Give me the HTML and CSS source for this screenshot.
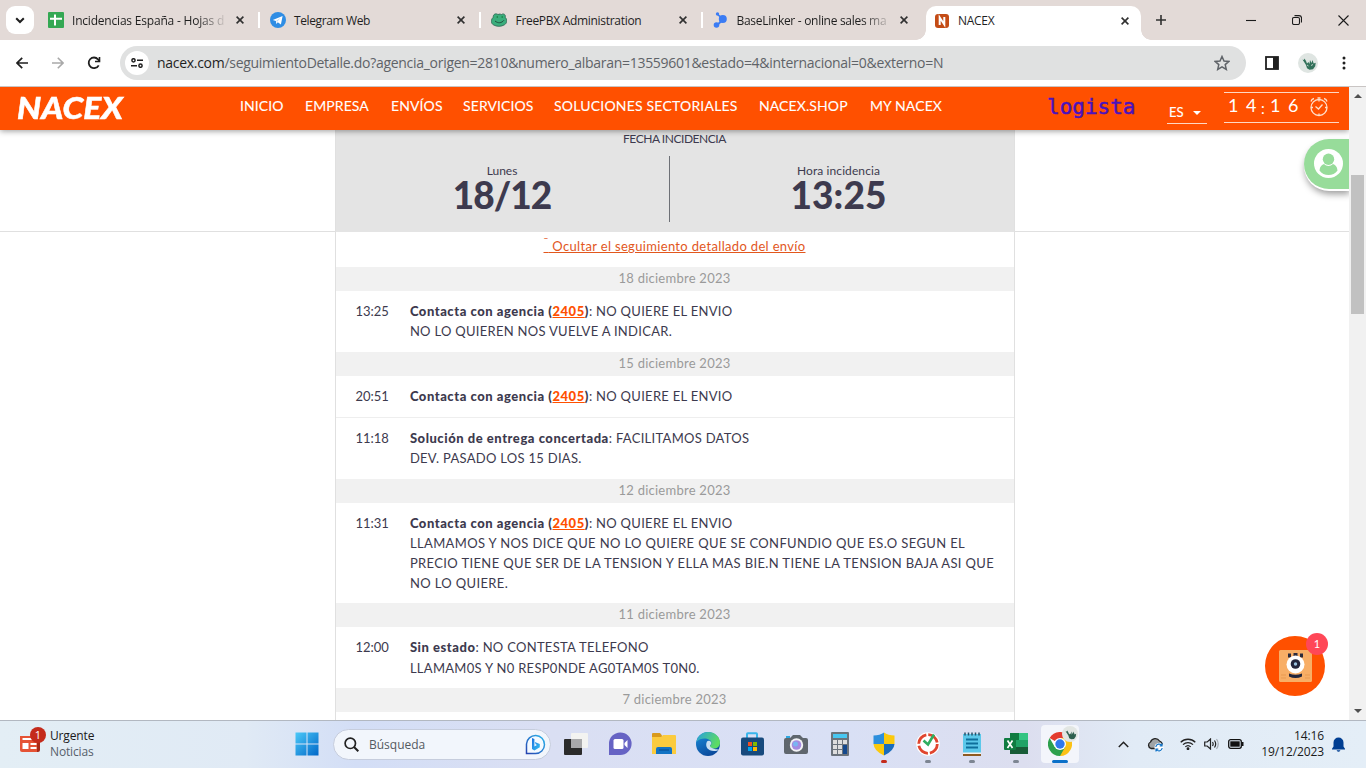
FILE: index.html
```html
<!DOCTYPE html>
<html lang="es">
<head>
<meta charset="utf-8">
<title>NACEX</title>
<link rel="stylesheet" href="styles.css">
</head>
<body>
<div class="screen">
  <div class="tabstrip">
    <div class="tabsearch"><svg width="10" height="7" viewBox="0 0 10 7"><path d="M1.2 1.2 5 5l3.8-3.8" fill="none" stroke="#1f1f1f" stroke-width="2"/></svg></div>
    <div class="tab">
      <svg class="fav" viewBox="0 0 16 16"><rect width="16" height="16" rx="1" fill="#34a853"/><path d="M7 2.5v11M2 6.7h12" stroke="#fff" stroke-width="2"/></svg>
      <span class="tab-title fade t1">Incidencias España - Hojas d</span>
      <svg class="x" viewBox="0 0 8 8"><path d="M.6.6l6.8 6.8M7.4.6.6 7.4"/></svg>
    </div>
    <div class="tab">
      <svg class="fav" viewBox="0 0 16 16"><circle cx="8" cy="8" r="8" fill="#2f8de4"/><path d="M2.8 8 12.6 4l-1.7 8.6-3.1-2.3-1.5 1.6-.4-2.9z" fill="#fff"/><path d="M6 9l5-3.5-3.8 4.3" fill="#b8d8f5"/></svg>
      <span class="tab-title t2">Telegram Web</span>
      <svg class="x" viewBox="0 0 8 8"><path d="M.6.6l6.8 6.8M7.4.6.6 7.4"/></svg>
    </div>
    <div class="tab">
      <svg class="fav" viewBox="0 0 16 16"><path d="M2.2 5.3C2 2 5 1 7 2.6c1.4-.8 2.4-.6 3.3 0C12.500 1 15 2.500 14.200 5.300c2.300 2.200 2 6-.8 7.500-3.200 2-7.600 2-10.700.2C-.5 11.400-.2 7.500 2.200 5.300z" fill="#3aae7c" stroke="#2b6350" stroke-width=".8"/><circle cx="6.300" cy="5" r=".8" fill="#173"/><circle cx="11.200" cy="5" r=".8" fill="#173"/><path d="M4 9c3 2.500 6.500 2.300 9-.8" fill="none" stroke="#205040"/></svg>
      <span class="tab-title t3">FreePBX Administration</span>
      <svg class="x" viewBox="0 0 8 8"><path d="M.6.6l6.8 6.8M7.4.6.6 7.4"/></svg>
    </div>
    <div class="tab last">
      <svg class="fav" viewBox="0 0 16 16"><g fill="#3b7cf4"><circle cx="9.800" cy="7" r="4"/><circle cx="3.500" cy="13" r="2.800"/><circle cx="4.500" cy="1.900" r="1.700"/><path d="M3.900 12 8 8l1.500 1.500-4.500 4zM4 3l1.200-1L9 5 7.500 6z"/></g></svg>
      <span class="tab-title fade t4">BaseLinker - online sales ma</span>
      <svg class="x" viewBox="0 0 8 8"><path d="M.6.6l6.8 6.8M7.4.6.6 7.4"/></svg>
    </div>
    <div class="tab active">
      <svg class="fav small" viewBox="0 0 14 14"><rect width="14" height="14" rx="3" fill="#c44c16"/><path d="M4.700 11V3.500l4.600 7V3" fill="none" stroke="#fff" stroke-width="2"/></svg>
      <span class="tab-title t5">NACEX</span>
      <svg class="x" viewBox="0 0 8 8"><path d="M.6.6l6.8 6.8M7.4.6.6 7.4"/></svg>
    </div>
    <svg class="plus" viewBox="0 0 10 10"><path d="M5 0v10M0 5h10" stroke="#303030" stroke-width="1.600"/></svg>
    <div class="winctl">
      <svg width="10" height="10" viewBox="0 0 10 10"><path d="M0 5.500h10"/></svg>
      <svg width="10" height="10" viewBox="0 0 10 10"><rect x=".5" y="2.500" width="7" height="7" rx="1.500"/><path d="M2.500.6H7a2.500 2.500 0 0 1 2.500 2.500v4.500"/></svg>
      <svg width="11" height="11" viewBox="0 0 11 11"><path d="M.5.5l10 10M10.500.5l-10 10"/></svg>
    </div>
  </div>

  <div class="toolbar">
    <svg class="nav-ic" width="12" height="12" viewBox="0 0 12 12"><path d="M12 6H1.200M6.200.8 1 6l5.200 5.200" fill="none" stroke="#1f1f1f" stroke-width="1.700"/></svg>
    <svg class="nav-ic" width="12" height="12" viewBox="0 0 12 12"><path d="M0 6h10.800M5.800.8 11 6l-5.200 5.200" fill="none" stroke="#a9a9a9" stroke-width="1.600"/></svg>
    <svg class="nav-ic reload" width="14" height="14" viewBox="0 0 14 14"><path d="M11.700 9.300A5.300 5.300 0 1 1 11 3.300L12.500 5" fill="none" stroke="#1f1f1f" stroke-width="1.800"/><path d="M13.300 1v5.300H8V4.700h3.700V1z" fill="#1f1f1f"/></svg>
    <div class="omnibox">
      <span class="site"><svg width="12" height="10" viewBox="0 0 12 10" fill="none" stroke="#1f1f1f" stroke-width="1.500"><circle cx="2.500" cy="2.300" r="1.600"/><path d="M6 2.300h6M0 7.700h6"/><circle cx="9.500" cy="7.700" r="1.600"/></svg></span>
      <span class="url"><b>nacex.com</b>/seguimientoDetalle.do?agencia_origen=2810&amp;numero_albaran=13559601&amp;estado=4&amp;internacional=0&amp;externo=N</span>
      <svg class="star" width="16" height="16" viewBox="0 0 16 16"><path d="M8 1.500l2 4.500 4.900.4-3.700 3.200 1.100 4.800L8 11.900l-4.300 2.500 1.100-4.800L1.100 6.400 6 6z" fill="none" stroke="#5f6368" stroke-width="1.500"/></svg>
    </div>
    <svg class="panel" width="14" height="14" viewBox="0 0 14 14"><rect x="1" y="1" width="12" height="12" fill="none" stroke="#1f1f1f" stroke-width="1.800"/><path d="M8 1h5v12H8z" fill="#1f1f1f"/></svg>
    <svg class="avatar" width="20" height="20" viewBox="0 0 20 20"><circle cx="10" cy="10" r="10" fill="#dfe5e2"/><path d="M4.500 6.500 6 7l.5-1.500L8 8l1 2.500L10.500 9l1 2 .5-4 1.500 3 1-3 1.200 3.500 2-.8-.5 3.500-2.200 3-3.500.5-2.500-1.500L8 12z" fill="#32715a"/><path d="M9 12l1.500 1M13 12.500l2-1" stroke="#dfe5e2" stroke-width=".8"/></svg>
    <svg class="dots" width="4" height="14" viewBox="0 0 4 14" fill="#1f1f1f"><circle cx="2" cy="2" r="1.500"/><circle cx="2" cy="7" r="1.500"/><circle cx="2" cy="12" r="1.500"/></svg>
  </div>

  <div class="viewport">
    <div class="page">
      <header class="site-header">
        <div class="logo"><span>NACEX</span></div>
        <nav class="menu">
          <a class="m1">INICIO</a><a class="m2">EMPRESA</a><a class="m3">ENVÍOS</a><a class="m4">SERVICIOS</a><a class="m5">SOLUCIONES SECTORIALES</a><a class="m6">NACEX.SHOP</a><a class="m7">MY NACEX</a>
        </nav>
        <div class="logista">logista</div>
        <div class="lang"><span>ES</span><i></i></div>
        <div class="clock"><span class="digits"><i>1</i><i>4</i><i class="colon">:</i><i>1</i><i>6</i></span>
          <svg width="20" height="20" viewBox="0 0 20 20" fill="none" stroke="#ffe0cc" stroke-width="1.300"><circle cx="10" cy="10.500" r="8"/><path d="M6.500 9.500l3 2.500 4-4.500M10 2.500v2M10 16.500v2M2 10.500h2M16 10.500h2M2 4.500Q2.500 2 5 1.500M18 4.500Q17.500 2 15 1.500M8.500 1h3"/></svg>
        </div>
      </header>

      <div class="content">
        <div class="gutter"></div>
        <main class="track">
          <section class="incident">
            <div class="inc-title">FECHA INCIDENCIA</div>
            <div class="inc-cols">
              <div class="inc-col left"><span>Lunes</span><strong class="date">18/12</strong></div>
              <div class="inc-col right"><span>Hora incidencia</span><strong>13:25</strong></div>
            </div>
          </section>
          <div class="toggle"><a><sup>ˉ</sup>&nbsp;Ocultar el seguimiento detallado del envío</a></div>

          <div class="day">18 diciembre 2023</div>
          <div class="entry"><time>13:25</time><div class="desc"><p><b>Contacta con agencia (<a>2405</a>)</b>: NO QUIERE EL ENVIO</p><p>NO LO QUIEREN NOS VUELVE A INDICAR.</p></div></div>
          <div class="day">15 diciembre 2023</div>
          <div class="entry"><time>20:51</time><div class="desc"><p><b>Contacta con agencia (<a>2405</a>)</b>: NO QUIERE EL ENVIO</p></div></div>
          <div class="entry ruled"><time>11:18</time><div class="desc"><p><b>Solución de entrega concertada</b>: FACILITAMOS DATOS</p><p>DEV. PASADO LOS 15 DIAS.</p></div></div>
          <div class="day">12 diciembre 2023</div>
          <div class="entry"><time>11:31</time><div class="desc"><p><b>Contacta con agencia (<a>2405</a>)</b>: NO QUIERE EL ENVIO</p><p class="long">LLAMAMOS Y NOS DICE QUE NO LO QUIERE QUE SE CONFUNDIO QUE ES.O SEGUN EL<br>PRECIO TIENE QUE SER DE LA TENSION Y ELLA MAS BIE.N TIENE LA TENSION BAJA ASI QUE<br>NO LO QUIERE.</p></div></div>
          <div class="day">11 diciembre 2023</div>
          <div class="entry"><time>12:00</time><div class="desc"><p><b>Sin estado</b>: NO CONTESTA TELEFONO</p><p>LLAMAM0S Y N0 RESP0NDE AG0TAM0S T0N0.</p></div></div>
          <div class="day">7 diciembre 2023</div>
        </main>
        <div class="gutter"></div>
      </div>

      <div class="user-tab"><svg width="29" height="29" viewBox="0 0 29 29"><circle cx="14.500" cy="14.500" r="14.500" fill="#fff"/><circle cx="14.500" cy="10.300" r="5.700" fill="#97dc9a"/><path d="M5.500 21.500c.3-4 2.500-6 4.500-6.500 2.500 2.500 6.500 2.500 9 0 2 .5 4.200 2.500 4.500 6.500-4 6-14 6-18 0z" fill="#97dc9a"/></svg></div>
      <div class="bot">
        <svg width="60" height="60" viewBox="0 0 60 60"><circle cx="30" cy="30" r="30" fill="#ff5000"/><rect x="14" y="14" width="33" height="32" rx="1.500" fill="#f8ae66"/><path d="M23 17.500h3v4h-3zM28.500 17h4v4h-4zM35 17.500h3v4h-3z" fill="#2b2b3c"/><circle cx="30.500" cy="28.500" r="9" fill="#fff"/><circle cx="30.500" cy="28" r="4.800" fill="#23263c"/><circle cx="30.500" cy="28" r="1.700" fill="#9cc4e0"/><path d="M24 37.500q6.500 2.500 13 0v3q-6.500 3-13 0z" fill="#23263c"/><path d="M16 39h5M16 42h5M40 39h5M40 42h5" stroke="#e99a50"/></svg>
        <span class="bot-badge">1</span>
      </div>
    </div>
    <div class="scrollbar"><i class="up"></i><i class="thumb"></i><i class="down"></i></div>
  </div>

  <div class="taskbar">
    <div class="news">
      <svg width="28" height="28" viewBox="0 0 28 28"><path d="M17 12h5v11q0 2-2 2h-3z" fill="#a72a18"/><path d="M2 9h17v16H4q-2 0-2-2z" fill="#e55335"/><path d="M4.500 12h13" stroke="#fff" stroke-width="2"/><path d="M4.500 16h6v6h-6zM12.500 16h6v2h-6zM12.500 20h6v2h-6z" fill="#fff"/><circle cx="20" cy="8" r="8" fill="#c42b1c"/><text x="20" y="12" text-anchor="middle" class="badge-num">1</text></svg>
      <div class="news-text"><span>Urgente</span><span class="dim">Noticias</span></div>
    </div>
    <svg class="start" width="24" height="24" viewBox="0 0 24 24"><defs><linearGradient id="w" x1="0" y1="0" x2="1" y2="1"><stop offset="0" stop-color="#4cc9f8"/><stop offset="1" stop-color="#0067c8"/></linearGradient></defs><path d="M.5.5h11v11H.5zM12.500.5h11v11h-11zM.5 12.500h11v11H.5zM12.500 12.500h11v11h-11z" fill="url(#w)"/></svg>
    <div class="search">
      <svg width="15" height="15" viewBox="0 0 15 15"><circle cx="6.300" cy="6.300" r="5.200" fill="none" stroke="#222" stroke-width="1.700"/><path d="M10 10l4.300 4.300" stroke="#222" stroke-width="2"/></svg>
      <span>Búsqueda</span>
      <svg class="bing" width="21" height="21" viewBox="0 0 21 21"><defs><linearGradient id="bg" x1="1" y1="0" x2="0" y2="1"><stop offset="0" stop-color="#2cb8ee"/><stop offset="1" stop-color="#2643b0"/></linearGradient><linearGradient id="bb" x1="0" y1="0" x2="1" y2="1"><stop offset="0" stop-color="#1a6fe0"/><stop offset="1" stop-color="#35c3f0"/></linearGradient></defs><path d="M1.500 19.500V10A9 9 0 1 1 10.500 19.500z" fill="#f4faff" stroke="url(#bg)" stroke-width="1.500"/><path d="M7 4l2.400 1v7.500L12 11l-1.300-.7-.9-2.300 5 2v3.300L9.400 16.500 7 15z" fill="url(#bb)"/></svg>
    </div>
    <div class="apps">
      <div class="app"><svg viewBox="0 0 24 24"><rect x="7" y="1" width="17" height="15" rx="1" fill="#f3f3f1"/><rect x="0" y="7" width="18" height="16" rx="1" fill="#2b2b2b"/><path d="M7 7h11v9H7z" fill="#a9a9ab"/></svg></div>
      <div class="app"><svg viewBox="0 0 24 24"><path d="M1 23V12A11.300 11.300 0 1 1 12 23z" fill="#6663c4"/><rect x="5.500" y="7" width="10" height="10" rx="1.500" fill="#fff"/><path d="M16.500 11l3-3v8l-3-3z" fill="#fff"/></svg></div>
      <div class="app"><svg viewBox="0 0 24 24"><path d="M0 2q0-1 1-1h7l2 2.500v4H0z" fill="#d99a1c"/><path d="M0 5h9l2-2h12q1 0 1 1v18H0z" fill="#fbcb3e"/><path d="M4 22v-5q0-2 2-2h12q2 0 2 2v5z" fill="#1273c4"/><path d="M7 18h10" stroke="#0a57a0" stroke-width="1.500"/></svg></div>
      <div class="app"><svg viewBox="0 0 24 24"><defs><linearGradient id="e1" x1="0" y1="0" x2="1" y2=".4"><stop offset="0" stop-color="#289fe0"/><stop offset="1" stop-color="#5ddc62"/></linearGradient><linearGradient id="e2" x1="0" y1="0" x2=".5" y2="1"><stop offset="0" stop-color="#1b8fdd"/><stop offset="1" stop-color="#0b4b9d"/></linearGradient></defs><circle cx="12" cy="12" r="12" fill="url(#e2)"/><path d="M.3 10C2 3 7 0 12 0c7 0 12 5 12 10.500 0 4-3 6-6 6-3 0-4.500-1-4-2.500 1-1 1.500-2 1.500-3C15 6 5 4.500.3 10z" fill="url(#e1)"/><path d="M11 9.500c-2.500 5 1 9.500 7 9.500 2 0 4-.5 5-1.500-1.500 0-3.500 0-5-.7-3-.8-4.500-2.300-4-3.300 1-1 1.500-2 1.200-3-.5-2-3.200-2.500-4.200-1z" fill="#c9dff1"/></svg></div>
      <div class="app"><svg viewBox="0 0 24 24"><path d="M7 7V2q0-.8.8-.8h8.400q.8 0 .8.8v5" fill="none" stroke="#39b5ec" stroke-width="2"/><rect x="1" y="5.500" width="23" height="18" rx="2" fill="#174a7d"/><path d="M8 10h4v4H8z" fill="#f25022"/><path d="M13 10h4v4h-4z" fill="#7fba00"/><path d="M8 15h4v4H8z" fill="#00a4ef"/><path d="M13 15h4v4h-4z" fill="#ffb900"/></svg></div>
      <div class="app"><svg viewBox="0 0 24 24"><path d="M0 8q0-2 2-2h4l3-3h7l3 3h3q2 0 2 2v12q0 2-2 2H2q-2 0-2-2z" fill="#5f666d"/><path d="M2 4h4v2H2z" fill="#2ea7e0"/><circle cx="12.500" cy="13" r="6.700" fill="#f2f2f5"/><circle cx="12.500" cy="13" r="4.800" fill="#a58ae0"/><circle cx="11.500" cy="12" r="2.500" fill="#79b5f2"/></svg></div>
      <div class="app"><svg viewBox="0 0 24 24"><rect x="3" y="0" width="18" height="24" rx="1" fill="#6b737c"/><path d="M5 2h14v4H5z" fill="#48c7f2"/><path d="M5 8h4v4H5zM10 8h4v4h-4zM15 8h4v4h-4zM5 13h4v4H5zM10 13h4v4h-4zM5 18h4v4H5zM10 18h4v4h-4z" fill="#dedede"/><path d="M15 13h4v9h-4z" fill="#14488c"/></svg></div>
      <div class="app red"><svg viewBox="0 0 24 24"><path d="M12 .5Q16 3.500 22.500 3.500V12H12z" fill="#fbc90c"/><path d="M12 .5Q8 3.500 1.500 3.500V12H12z" fill="#2d8fdd"/><path d="M1.500 12q.5 7 10.500 11.500V12z" fill="#fbc90c"/><path d="M22.500 12q-.5 7-10.500 11.500V12z" fill="#1a6dbd"/></svg></div>
      <div class="app gray"><svg viewBox="0 0 24 24"><circle cx="12" cy="12" r="11.800" fill="#fff"/><circle cx="12" cy="12" r="9.300" fill="none" stroke="#e0452f" stroke-width="2.800" stroke-dasharray="12.600 2.008"/><path d="M7.500 8.500l4.500 4L18 2.500" fill="none" stroke="#2fae60" stroke-width="2.600"/></svg></div>
      <div class="app gray"><svg viewBox="0 0 24 24"><path d="M3 21h18v3H3z" fill="#8e5a21"/><path d="M3 2h18v19.500H3z" fill="#5cc8ea"/><path d="M5 .5v3M8.500.5v3M12 .5v3M15.500.5v3M19 .5v3" stroke="#24506a" stroke-width="1.500"/><path d="M6 7.500h12M6 11.500h12M6 15.500h12" stroke="#0e6f9c" stroke-width="1.800"/><path d="M3 20.500h18v1.500H3z" fill="#f5f3ef"/></svg></div>
      <div class="app gray"><svg viewBox="0 0 24 24"><path d="M6 1h18v21H6z" fill="#21a366"/><path d="M6 1h9v7H6z" fill="#107c41"/><path d="M15 1h9v7h-9z" fill="#33c481"/><path d="M6 15h18v7H6z" fill="#185c37"/><rect y="6" width="12" height="12" rx="1" fill="#107c41"/><path d="M3.500 8.500l5 7.500M8.500 8.500 3.500 16" stroke="#fff" stroke-width="1.700"/></svg></div>
      <div class="app current"><svg viewBox="0 0 24 24"><circle cx="12" cy="12" r="12" fill="#fff"/><path d="M12 12 1.600 6A12 12 0 0 1 22.400 6z" fill="#e33b2e"/><path d="M12 12V6h10.400A12 12 0 0 1 12 24z" fill="#fbc116"/><path d="M12 24A12 12 0 0 1 1.600 6l5.200 9L17.200 15z" fill="#2da04d"/><circle cx="12" cy="12" r="6" fill="#fff"/><circle cx="12" cy="12" r="4.700" fill="#3078ea"/></svg>
        <svg class="profile" viewBox="0 0 20 20"><circle cx="10" cy="10" r="10" fill="#e2e6e3"/><path d="M4.500 6.500 6 7l.5-1.500L8 8l1 2.500L10.500 9l1 2 .5-4 1.500 3 1-3 1.200 3.500 2-.8-.5 3.500-2.200 3-3.500.5-2.500-1.500L8 12z" fill="#2e604e"/></svg></div>
    </div>
    <div class="tray">
      <svg class="up-ic" width="11" height="7" viewBox="0 0 11 7"><path d="M.8 6 5.500 1.300 10.200 6" fill="none" stroke="#222" stroke-width="1.500"/></svg>
      <svg class="cloud" width="17" height="15" viewBox="0 0 17 15"><path d="M4 11.500A3.500 3.500 0 0 1 3.500 5a5 5 0 0 1 9-1A4 4 0 0 1 15 9.500L13 11.500z" fill="#a0a4a6" stroke="#222" stroke-width="1.300"/><circle cx="12" cy="10.500" r="4.500" fill="#fff"/><path d="M8.800 10a3.300 3.300 0 0 1 6-1.500M15.200 11a3.300 3.300 0 0 1-6 1.500M15 6.500v2.300h-2.300M9 14.500v-2.300h2.300" fill="none" stroke="#1374c8" stroke-width="1.200"/></svg>
      <svg class="wifi" width="16" height="12" viewBox="0 0 16 12" fill="none" stroke="#222" stroke-width="1.300"><path d="M.7 4.200a10.500 10.500 0 0 1 14.600 0M3 6.600a7.200 7.200 0 0 1 10 0M5.300 8.900a3.900 3.900 0 0 1 5.400 0"/><circle cx="8" cy="10.700" r=".8" fill="#222"/></svg>
      <svg class="vol" width="15" height="12" viewBox="0 0 15 12" fill="none" stroke="#222" stroke-width="1.200"><path d="M.7 4v4h2.500L6.500 11V1L3.200 4zM8.500 4q1.300 2 0 4M10.500 2.500q2.400 3.500 0 7"/><path d="M12.500 1q3.500 5 0 10" stroke="#a5abb2"/></svg>
      <svg class="bat" width="16" height="10" viewBox="0 0 16 10"><rect x=".7" y=".7" width="12.600" height="8.600" rx="2" fill="none" stroke="#111" stroke-width="1.300"/><rect x="2.300" y="2.300" width="9.400" height="5.400" fill="#111"/><path d="M14.500 3v4" stroke="#111" stroke-width="2"/></svg>
      <div class="when"><span>14:16</span><span>19/12/2023</span></div>
      <svg class="bell" width="13" height="15" viewBox="0 0 13 15" fill="#003e92"><path d="M1.500 9.500V5.500a5 5 0 0 1 10 0v4l1.500 2.300v.7H0v-.7zM4.500 13.200h4q-2 3-4 0z"/></svg>
    </div>
  </div>
</div>
</body>
</html>
```
FILE: styles.css
```css
* { box-sizing: border-box; }
body { margin: 0; font-family: "Lato", sans-serif; }
svg { display: block; flex: none; }
.screen { width: 1366px; height: 768px; overflow: hidden; display: flex; flex-direction: column; background: #fff; }

/* Browser tabs */
.tabstrip { height: 40px; flex: none; display: flex; align-items: center; background: #e3dad7; font-family: "Open Sans", sans-serif; font-size: 12px; color: #1f1f1f; padding-left: 6px; }
.tabsearch { width: 28px; height: 28px; border-radius: 9px; background: #fff; margin-right: 4px; display: flex; align-items: center; justify-content: center; }
.tab { width: 221.500px; height: 16px; padding: 0 14px 0 10px; border-right: 2px solid #fff; display: flex; align-items: center; flex: none; }
.tab.last { border-right-color: transparent; }
.fav { width: 16px; height: 16px; margin-right: 8px; }
.fav.small { width: 14px; height: 14px; margin-right: 9px; }
.tab-title { flex: 1; white-space: nowrap; line-height: 18px; padding-top: 1px; letter-spacing: -.3px; }
.t1 { letter-spacing: -.2px; }
.t2 { letter-spacing: -.38px; padding-left: .5px; }
.t3 { letter-spacing: -.3px; padding-left: .5px; }
.fade { -webkit-mask-image: linear-gradient(90deg, #000 125px, transparent 156px); mask-image: linear-gradient(90deg, #000 125px, transparent 156px); }
.x { width: 8px; height: 8px; stroke: #303030; stroke-width: 1.600; }
.tab.active { width: 215px; height: 34px; margin: 6px 0 0 2px; padding: 0 12px 5px 9px; background: #fff; border: 0; border-radius: 10px 10px 0 0; position: relative; }
.tab.active::before, .tab.active::after { content: ""; position: absolute; bottom: 0; width: 10px; height: 10px; }
.tab.active::before { left: -10px; background: radial-gradient(circle at 0 0, transparent 9.500px, #fff 10px); }
.tab.active::after { right: -10px; background: radial-gradient(circle at 100% 0, transparent 9.500px, #fff 10px); }
.plus { width: 10px; height: 10px; margin-left: 15px; }
.winctl { margin-left: auto; padding-right: 17px; display: flex; align-items: center; gap: 36px; }
.winctl svg { fill: none; stroke: #1b1b1b; stroke-width: 1.100; }

/* Browser toolbar */
.toolbar { height: 47px; flex: none; display: flex; align-items: center; background: #fff; border-bottom: 1px solid #c9c5c4; padding-left: 16px; }
.nav-ic { margin-right: 24px; }
.nav-ic.reload { margin: 0 19px 0 -1px; }
.omnibox { width: 1126px; height: 34px; border-radius: 17px; background: #e0e1e1; display: flex; align-items: center; padding: 0 16px 0 5px; }
.site { width: 24px; height: 24px; border-radius: 50%; background: #fff; display: flex; align-items: center; justify-content: center; margin-right: 8px; }
.url { flex: 1; font: 14px/20px "Open Sans", sans-serif; letter-spacing: -.29px; color: #5f6368; white-space: nowrap; }
.url b { font-weight: 400; color: #1f1f1f; }
.panel { margin-left: 19px; }
.avatar { margin-left: 19px; }
.dots { margin-left: 24px; }

/* Viewport */
.viewport { height: 633px; flex: none; display: flex; }
.page { flex: 1; min-width: 0; position: relative; overflow: hidden; }
.site-header { height: 43px; background: #ff5000; color: #fff; display: flex; position: relative; z-index: 2; box-shadow: 0 1px 6px rgba(0,0,0,.4); }
.logo { width: 240px; padding-left: 17px; font: italic 900 30px/41px "Lato", sans-serif; }
.logo span { display: inline-block; transform: scaleX(1.12); transform-origin: 0 0; -webkit-text-stroke: .5px #fff; }
.menu { display: flex; gap: 22px; font-size: 14px; line-height: 38px; letter-spacing: .1px; white-space: nowrap; -webkit-text-stroke: .1px #fff; }
.m1 { width: 43px; } .m2 { width: 64px; } .m3 { width: 50px; } .m4 { width: 69px; } .m5 { width: 183px; letter-spacing: .2px; } .m6 { width: 89px; } .m7 { width: 73px; }
.logista { margin-left: 104px; width: 88px; font: 21px/41px "DejaVu Sans Mono", monospace; color: #4a12bd; -webkit-text-stroke: .5px #4a12bd; }
.lang { margin: 13px 0 0 32px; width: 40px; height: 24px; border-bottom: 1px solid #ffd8c4; font-size: 13px; line-height: 26px; padding-left: 2px; display: flex; align-items: center; justify-content: space-between; padding-right: 6px; -webkit-text-stroke: .15px #fff; }
.lang i { border: 4.500px solid transparent; border-top-color: #fff; border-bottom: 0; margin-top: 2px; }
.clock { margin: 5px 0 0 17px; width: 115px; height: 31px; border: solid #ffd8c4; border-width: 1px 0; display: flex; align-items: center; padding: 0 10px 2px 4px; justify-content: space-between; }
.digits { display: flex; font: 18px/26px "Lato", sans-serif; }
.digits i { font-style: normal; width: 18px; }
.digits i:nth-child(2) { width: 15px; }
.digits .colon { width: 9px; padding-top: 3px; font-size: 15px; }

.content { display: flex; height: 590px; }
.gutter { flex: 1; height: 102px; border-bottom: 1px solid #e0e0e0; }
.track { width: 680px; height: 600px; border: solid #e0e0e0; border-width: 0 1px; color: #3d3a4e; font-size: 13px; }
.incident { height: 102px; background: #e4e4e4; text-align: center; }
.inc-title { font-size: 12px; line-height: 18px; letter-spacing: -.45px; }
.inc-cols { display: flex; margin-top: 8px; height: 66px; }
.inc-col { flex: 1; display: flex; flex-direction: column; }
.inc-col.left { flex: 0 0 334px; border-right: 1px solid #6d7076; }
.inc-col.right { padding-right: 6px; letter-spacing: .1px; }
.inc-col span { font-size: 12px; line-height: 14px; padding-top: 8px; }
.inc-col strong { font-size: 37px; line-height: 34px; font-weight: 900; }
.inc-col .date { letter-spacing: -1px; }
.toggle { height: 35px; text-align: center; line-height: 29px; }
.toggle a { color: #e2571d; text-decoration: underline; letter-spacing: .33px; }
.toggle sup { font-size: 12px; line-height: 0; }
.day { height: 24px; background: #f1f1f1; color: #9a9a9a; text-align: center; line-height: 23px; letter-spacing: .25px; }
.entry { display: flex; padding: 9px 0 10px 20px; }
.entry.ruled { border-top: 1px solid #eee; }
time { width: 54px; line-height: 22px; }
.desc { padding-left: .4px; }
.desc p { margin: 0; line-height: 22px; white-space: nowrap; letter-spacing: .29px; }
.desc p + p { line-height: 19.600px; padding-top: .4px; }
.desc .long { letter-spacing: .37px; }
.desc b { font-weight: 900; letter-spacing: .54px; }
.desc a { color: #ff5000; text-decoration: underline; }

.user-tab { position: absolute; right: 0; top: 52px; width: 45px; height: 50px; background: #97dc9a; border-radius: 25px 0 0 25px; box-shadow: 0 2px 0 #fff, 1px 5px 7px rgba(0,0,0,.4); padding: 10px; }
.bot { position: absolute; right: 24px; top: 549px; }
.bot-badge { position: absolute; right: -3px; top: -3px; width: 22px; height: 22px; border-radius: 50%; background: #ff4757; color: #fff; font-size: 11px; line-height: 22px; text-align: center; }

.scrollbar { width: 17px; background: #f1f1f1; position: relative; }
.scrollbar i { position: absolute; left: 5px; border: 4px solid transparent; }
.scrollbar .up { top: 7px; border-bottom-color: #505050; border-top: 0; }
.scrollbar .down { bottom: 7px; border-top-color: #505050; border-bottom: 0; }
.scrollbar .thumb { left: 2px; top: 88px; width: 13px; height: 139px; border: 0; background: #c1c1c1; }

/* Taskbar */
.taskbar { height: 48px; flex: none; display: flex; align-items: center; padding-bottom: 1px; border-top: 1px solid #b2b8c1; background: linear-gradient(90deg, #e3eef5 0, #e0eaf5 18%, #d3def6 26%, #dadff3 40%, #d9e0f5 62%, #dcdeef 75%, #e1ebf6 83%, #e4eef7 100%); font-family: "Open Sans", sans-serif; font-size: 12px; color: #1a1a1a; }
.news { width: 295px; padding: 0 0 6px 18px; display: flex; align-items: center; flex: none; }
.badge-num { font: 11px "Open Sans", sans-serif; fill: #fff; }
.news-text { display: flex; flex-direction: column; margin: 6px 0 0 4px; line-height: 16px; letter-spacing: -.15px; }
.dim { color: #56606b; }
.search { width: 218px; height: 31px; margin: 0 3px 0 14px; border-radius: 16px; background: #f2f6fc; border: 1px solid #c6cddd; display: flex; align-items: center; padding: 0 4px 0 10px; color: #555a61; flex: none; }
.search span { flex: 1; margin-left: 10px; }
.apps { display: flex; }
.app { width: 44px; height: 38px; position: relative; display: flex; align-items: center; justify-content: center; }
.app svg { width: 24px; height: 24px; }
.app.red::after, .app.gray::after, .app.current::after { content: ""; position: absolute; bottom: 0; left: 19px; width: 6px; height: 3px; border-radius: 2px; background: #7d8592; }
.app.red::after { background: #c42b1c; }
.app.current::after { left: 14px; width: 16px; background: #0a70c9; }
.app.current::before { content: ""; position: absolute; left: 3px; width: 38px; height: 38px; top: 0; border-radius: 4px; background: #f3f5fb; }
.app.current svg { position: relative; }
.app.current .profile { position: absolute; width: 16px; height: 16px; left: 24px; top: 1px; }
.tray { flex: 1; display: flex; align-items: center; }
.up-ic { margin-left: 36px; }
.cloud { margin-left: 18px; }
.wifi { margin-left: 16px; }
.vol { margin-left: 8px; }
.bat { margin-left: 9px; }
.when { width: 80px; display: flex; flex-direction: column; text-align: right; line-height: 16px; letter-spacing: -.1px; }
.bell { margin-left: 8px; }
```
